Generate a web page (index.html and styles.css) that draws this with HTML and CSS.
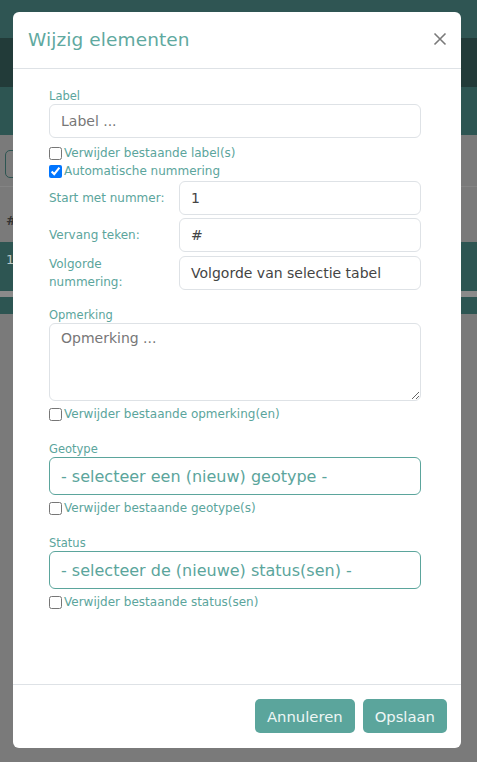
FILE: index.html
```html
<!DOCTYPE html>
<html lang="nl">
<head>
<meta charset="utf-8">
<title>Wijzig elementen</title>
<link rel="stylesheet" href="styles.css">
</head>
<body>
<div class="page">
  <div class="band band-top"></div>
  <div class="band band-dark"></div>
  <div class="band band-teal"></div>
  <div class="toolbar"><span class="tool-btn"></span></div>
  <div class="thead"><span class="hash">#</span></div>
  <div class="row-teal"><span class="one">1</span></div>
  <div class="strip"></div>
  <div class="row-teal2"></div>
</div>

<div class="modal">
  <div class="modal-header">
    <h2 class="modal-title">Wijzig elementen</h2>
    <button class="close" aria-label="Sluiten">
      <svg width="14" height="14" viewBox="0 0 14 14"><path d="M1.5 1.5 L12.5 12.5 M12.5 1.5 L1.5 12.5" stroke="#7a7a7a" stroke-width="1.6" fill="none"/></svg>
    </button>
  </div>
  <div class="modal-body">
    <label class="field-label">Label</label>
    <input class="text-input" type="text" placeholder="Label ...">
    <label class="check first"><input type="checkbox"><span>Verwijder bestaande label(s)</span></label>
    <label class="check"><input type="checkbox" checked><span>Automatische nummering</span></label>
    <div class="num-grid">
      <span class="grid-label">Start met nummer:</span>
      <input class="text-input val" type="text" value="1">
      <span class="grid-label">Vervang teken:</span>
      <input class="text-input val" type="text" value="#">
      <span class="grid-label">Volgorde<br>nummering:</span>
      <div class="text-input val fake">Volgorde van selectie tabel</div>
    </div>

    <label class="field-label sec first-sec">Opmerking</label>
    <textarea class="text-area" placeholder="Opmerking ..."></textarea>
    <label class="check after"><input type="checkbox"><span>Verwijder bestaande opmerking(en)</span></label>

    <label class="field-label sec">Geotype</label>
    <div class="select-box">- selecteer een (nieuw) geotype -</div>
    <label class="check after"><input type="checkbox"><span>Verwijder bestaande geotype(s)</span></label>

    <label class="field-label sec">Status</label>
    <div class="select-box">- selecteer de (nieuwe) status(sen) -</div>
    <label class="check after"><input type="checkbox"><span>Verwijder bestaande status(sen)</span></label>
  </div>
  <div class="modal-footer">
    <button class="btn">Annuleren</button>
    <button class="btn">Opslaan</button>
  </div>
</div>
</body>
</html>
```
FILE: styles.css
```css
* { box-sizing: border-box; }
html, body { margin: 0; padding: 0; }
body {
  width: 477px;
  height: 762px;
  overflow: hidden;
  background: #7a7a7a;
  font-family: "DejaVu Sans", "Noto Sans", sans-serif;
}
.page { display: flex; flex-direction: column; }
.band-top { height: 38px; background: #2f5553; }
.band-dark { height: 49px; background: #223b39; }
.band-teal { height: 48px; background: #2d5552; }
.toolbar { height: 52px; padding: 15px 0 0 5px; border-bottom: 1px solid #848484; }
.tool-btn { display: block; width: 30px; height: 28px; border: 1px solid #2d5552; border-radius: 5px; }
.thead { height: 55px; padding: 26px 0 0 6px; color: #333; font-size: 13px; font-weight: bold; }
.row-teal { height: 49px; background: #2d5552; padding: 10px 0 0 6px; color: #bcc9c7; font-size: 13px; }
.strip { height: 6px; background: #8a8a8a; }
.row-teal2 { height: 17px; background: #2d5552; }

.modal {
  position: absolute;
  left: 13px;
  top: 12px;
  width: 448px;
  height: 736px;
  background: #fff;
  border-radius: 6px;
  display: flex;
  flex-direction: column;
}
.modal-header {
  height: 57px;
  border-bottom: 1px solid #dee2e6;
  display: flex;
  align-items: center;
  justify-content: space-between;
  padding: 0 14px 2px 15px;
}
.modal-title {
  margin: 0;
  font-size: 18.5px;
  font-weight: normal;
  color: #5fa9a0;
  letter-spacing: 0.1px;
}
.close { border: 0; background: none; padding: 0; width: 14px; height: 14px; display: flex; }
.modal-body {
  flex: 1;
  padding: 19px 40px 0 36px;
  display: flex;
  flex-direction: column;
}
.field-label {
  display: block;
  font-size: 11.5px;
  line-height: 16px;
  height: 16px;
  color: #5ba59c;
}
.field-label.sec { margin-top: 18px; }
.field-label.first-sec { margin-top: 16px; }
.text-input {
  height: 34px;
  border: 1px solid #dee2e6;
  border-radius: 6px;
  padding: 0 11px;
  font-family: inherit;
  font-size: 14px;
  color: #444;
  background: #fff;
  width: 100%;
  outline: none;
}
.text-input::placeholder { color: #777; }
.text-input.fake { display: flex; align-items: center; }
.check {
  display: flex;
  align-items: center;
  height: 18px;
  font-size: 12px;
  color: #5ba59c;
}
.check.first { margin-top: 6px; }
.check.after { margin-top: 4px; }
.check input {
  margin: 0 2px 0 0;
  width: 13px;
  height: 13px;
}
.num-grid {
  margin-top: 1px;
  display: grid;
  grid-template-columns: 130px 1fr;
  row-gap: 3px;
  align-items: center;
}
.grid-label {
  font-size: 12px;
  line-height: 18px;
  color: #5ba59c;
}
.text-area {
  height: 78px;
  width: 100%;
  border: 1px solid #dee2e6;
  border-radius: 6px;
  padding: 6px 11px;
  font-family: inherit;
  font-size: 14px;
  resize: vertical;
  outline: none;
}
.text-area::placeholder { color: #777; }
.select-box {
  height: 38px;
  border: 1px solid #5ba59c;
  border-radius: 6px;
  padding: 0 11px;
  display: flex;
  align-items: center;
  font-size: 16px;
  color: #5ba59c;
}
.modal-footer {
  height: 64px;
  border-top: 1px solid #dee2e6;
  display: flex;
  justify-content: flex-end;
  align-items: flex-start;
  gap: 8px;
  padding: 14px 14px 0 0;
}
.btn {
  height: 34px;
  border: 0;
  border-radius: 5px;
  background: #5ba59c;
  color: #eef6f5;
  font-family: inherit;
  font-size: 14.8px;
  padding: 0 12px;
}
```
